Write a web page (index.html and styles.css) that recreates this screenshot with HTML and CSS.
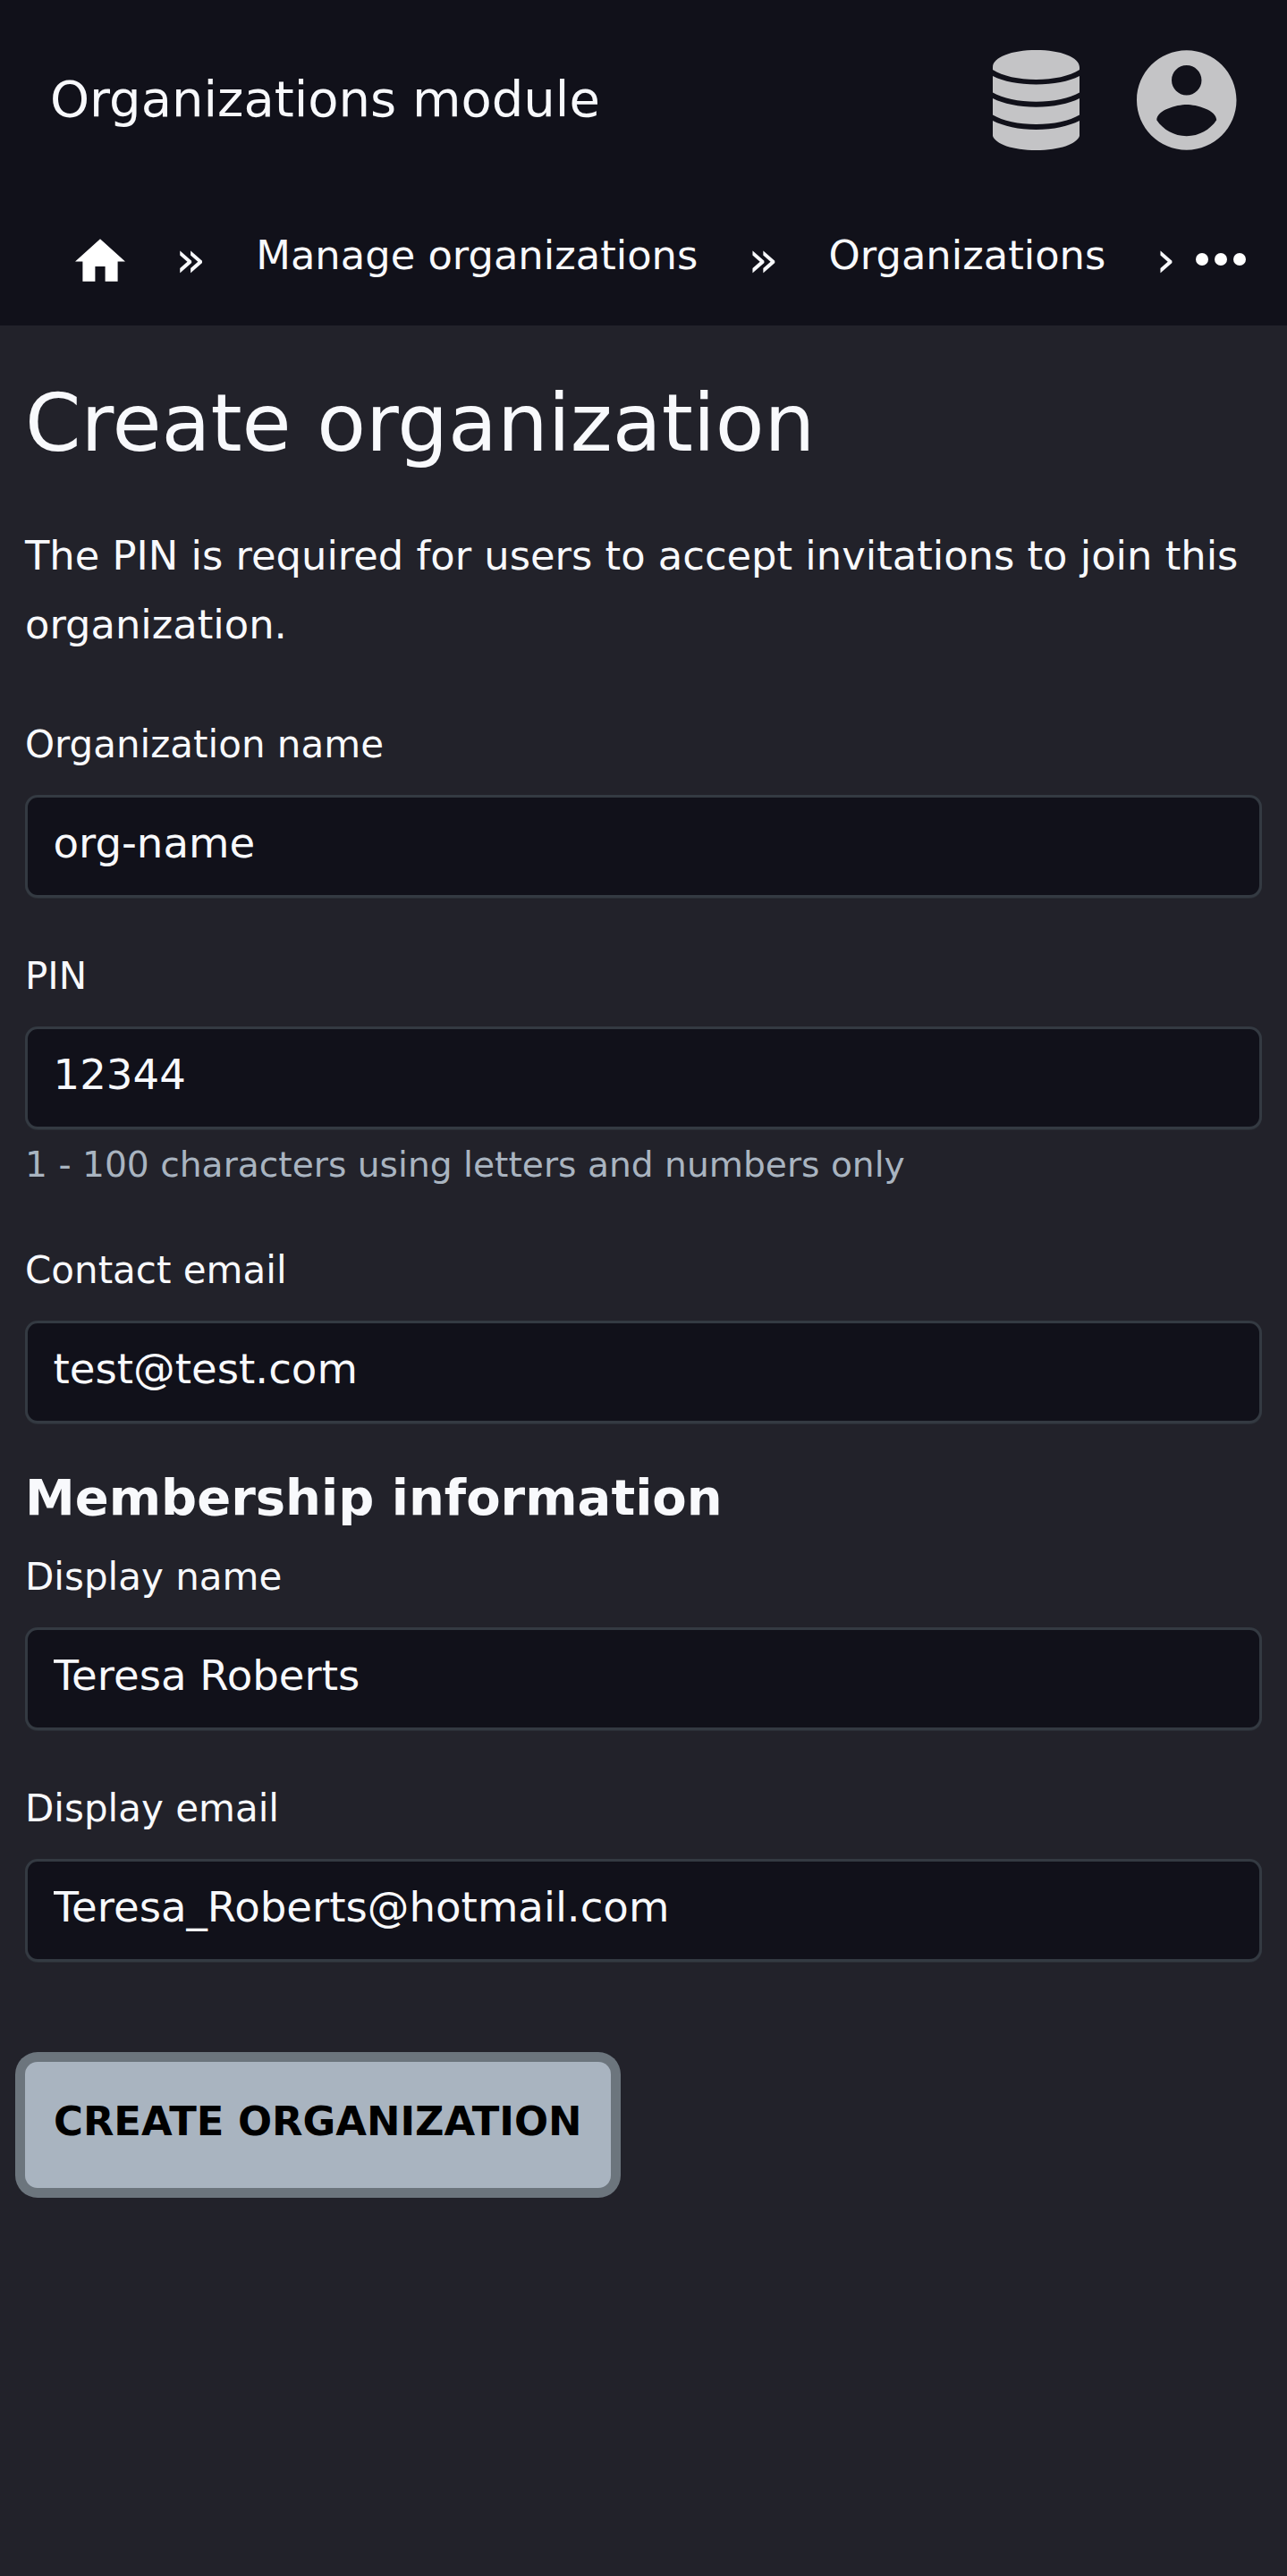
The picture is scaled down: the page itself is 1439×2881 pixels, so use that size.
FILE: index.html
```html
<!DOCTYPE html>
<html lang="en">
<head>
<meta charset="utf-8">
<title>Create organization</title>
<link rel="stylesheet" href="styles.css">
</head>
<body>
<header class="header">
  <div class="topbar">
    <span class="module">Organizations module</span>
    <svg class="db" viewBox="0 0 97 112"><path d="M48.500 0C76 0 97 8 97 19V22C86 29 68 33 48.500 33S11 29 0 22V19C0 8 21 0 48.500 0ZM0 29C12 35 29 38.500 48.500 38.500S85 35 97 29V47.500C86 54 68 57.800 48.500 57.800S11 54 0 47.500ZM0 54C12 60 29 63.700 48.500 63.700S85 60 97 54V72.500C86 79 68 83 48.500 83S11 79 0 72.500ZM0 79C12 85 29 89 48.500 89S85 85 97 79V96C94 105 75 112 48.500 112S3 105 0 96Z"/></svg>
    <svg class="account" viewBox="2 2 20 20"><path d="M12 2C6.480 2 2 6.480 2 12s4.480 10 10 10 10-4.480 10-10S17.520 2 12 2zm0 3c1.660 0 3 1.340 3 3s-1.340 3-3 3-3-1.340-3-3 1.340-3 3-3zm0 14.200c-2.500 0-4.710-1.280-6-3.220.03-1.990 4-3.080 6-3.080 1.990 0 5.970 1.090 6 3.080-1.290 1.940-3.500 3.220-6 3.220z"/></svg>
  </div>
  <nav class="crumbs">
    <svg class="home" viewBox="2 3 20 17"><path d="M10 20v-6h4v6h5v-8h3L12 3 2 12h3v8z"/></svg>
    <span class="sep">»</span>
    <a class="crumb">Manage organizations</a>
    <span class="sep">»</span>
    <a class="crumb">Organizations</a>
    <span class="sep">›</span>
    <svg class="more" viewBox="4 10 16 4"><circle cx="6" cy="12" r="2"/><circle cx="12" cy="12" r="2"/><circle cx="18" cy="12" r="2"/></svg>
  </nav>
</header>
<main class="main">
  <h1 class="heading">Create organization</h1>
  <p class="intro">The PIN is required for users to accept invitations to join this organization.</p>
  <form class="form">
    <div class="field"><label class="label" for="org">Organization name</label><input class="input" id="org" value="org-name"></div>
    <div class="field"><label class="label" for="pin">PIN</label><input class="input" id="pin" value="12344"><small class="hint">1 - 100 characters using letters and numbers only</small></div>
    <div class="field field-last"><label class="label" for="contact">Contact email</label><input class="input" id="contact" value="test@test.com"></div>
    <h2 class="subheading">Membership information</h2>
    <div class="field"><label class="label" for="name">Display name</label><input class="input" id="name" value="Teresa Roberts"></div>
    <div class="field"><label class="label" for="email">Display email</label><input class="input" id="email" value="Teresa_Roberts@hotmail.com"></div>
    <button class="submit" type="button">CREATE ORGANIZATION</button>
  </form>
</main>
</body>
</html>
```
FILE: styles.css
```css
* { box-sizing: border-box; }
body {
  margin: 0;
  min-height: 2881px;
  background: #22222a;
  color: #f8f9fc;
  font-family: "DejaVu Sans", sans-serif;
}
.header { height: 364px; background: #11111a; overflow: hidden; }
.topbar { display: flex; align-items: center; height: 224px; padding: 0 56.5px 0 56px; fill: #c4c4c6; }
.module { margin-right: auto; padding-bottom: 3px; font-size: 56px; line-height: 66px; }
.db { width: 97px; height: 112px; margin-right: 64px; }
.account { width: 111.5px; height: 112px; }
.crumbs { display: flex; align-items: center; height: 132px; padding: 0 46px 0 84px; white-space: nowrap; fill: #fff; }
.home { flex: none; width: 56px; height: 48px; margin-top: 1px; }
.sep { margin: 0 56px; font-size: 56px; line-height: 66px; }
.sep:last-of-type { margin-right: 0; }
.crumb { padding-bottom: 9px; font-size: 44.8px; line-height: 54px; }
.more { flex: none; width: 56px; height: 14px; margin-left: auto; }
.main { padding: 56px 28px 0; }
.heading { margin: 0; font-size: 89.6px; font-weight: 400; line-height: 106px; }
.intro { margin: 57px 0 0; font-size: 44.8px; line-height: 77px; }
.form { margin-top: 71px; }
.field { display: flex; flex-direction: column; margin-bottom: 63px; }
.field-last { margin-bottom: 50px; }
.label { font-size: 42px; line-height: 50px; }
.input {
  width: 100%;
  height: 115px;
  margin: 31px 0 0;
  padding: 23px 28.5px 30px;
  border: 3px solid #343a42;
  border-radius: 14px;
  background: #11111a;
  color: #f8f9fc;
  box-shadow: 0 1px 0 #2a2e35;
  font-family: inherit;
  font-size: 46.67px;
  line-height: 56px;
  outline: none;
}
.hint { margin: 14px 0 5px; color: #a9b4c0; font-size: 39.2px; line-height: 51px; }
.subheading { margin: 0 0 32px; font-size: 56px; font-weight: 700; line-height: 65px; }
.submit {
  height: 141px;
  margin-top: 49px;
  padding: 0 32px 9px;
  border: 0;
  border-radius: 14px;
  background: #a9b4c0;
  box-shadow: 0 0 0 11px #6c757d;
  color: #000;
  font-family: inherit;
  font-size: 44.8px;
  font-weight: 700;
}
```
